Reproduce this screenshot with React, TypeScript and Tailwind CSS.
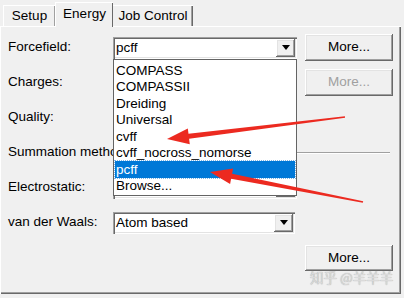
const sunken =
  "shadow-[inset_1px_1px_0_#a0a0a0,inset_2px_2px_0_#696969,inset_-1px_-1px_0_#ffffff,inset_-2px_-2px_0_#e3e3e3]";
const raised =
  "shadow-[inset_-1px_-1px_0_#696969,inset_1px_1px_0_#ffffff,inset_-2px_-2px_0_#a0a0a0,inset_2px_2px_0_#e3e3e3]";

function Combo({ text = "", className = "w-[184px]" }: { text?: string; className?: string }) {
  return (
    <div className={`flex h-[22px] items-stretch bg-white ${sunken} ${className}`}>
      <span className="flex flex-1 items-center pl-[3px] leading-none">{text}</span>
      <span className={`m-[2px] flex w-[19px] items-center justify-center bg-[#f0f0f0] ${raised}`}>
        <svg width="8" height="5" viewBox="0 0 8 5">
          <path d="M0 0h8L4 5z" fill="#000" />
        </svg>
      </span>
    </div>
  );
}

function Button({ disabled, className = "h-[27px]" }: { disabled?: boolean; className?: string }) {
  return (
    <div
      className={`flex w-[88px] items-center justify-center bg-[#f0f0f0] ${raised} ${className} ${
        disabled ? "text-[#a0a0a0]" : "text-black"
      }`}
    >
      More...
    </div>
  );
}

const items = ["COMPASS", "COMPASSII", "Dreiding", "Universal", "cvff", "cvff_nocross_nomorse", "pcff", "Browse..."];

export default function App() {
  return (
    <div className="relative h-[298px] w-[404px] overflow-hidden bg-[#f0f0f0] font-['Liberation_Sans',Arial,sans-serif] text-[13.5px] text-black">
      {/* tabs */}
      <div className="flex h-[26px] items-end pl-[3px]">
        <div className="flex h-[21px] w-[52px] items-center justify-center border-l border-t border-white shadow-[inset_-1px_0_0_#a0a0a0]">
          Setup
        </div>
        <div className="relative z-10 -mb-px flex h-[25px] w-[58px] items-center justify-center border-l border-t border-white bg-[#f0f0f0] pb-[2px] shadow-[inset_-1px_0_0_#696969]">
          Energy
        </div>
        <div className="flex h-[21px] w-[80px] items-center justify-center border-t border-white shadow-[inset_-1px_0_0_#696969,inset_-2px_0_0_#a0a0a0]">
          Job Control
        </div>
      </div>

      {/* tab page */}
      <div className="h-[268px] w-[401px] border-l border-t border-white shadow-[inset_-1px_-1px_0_#696969,inset_-2px_-2px_0_#a0a0a0] px-[7px] pt-[3px]">
        <div className="grid grid-cols-[97px_184px_88px] gap-x-[8px]">
          <div className="flex h-[35px] items-center">Forcefield:</div>
          <div className="flex items-center">
            <Combo text="pcff" />
          </div>
          <div className="flex items-center">
            <Button />
          </div>

          <div className="flex h-[35px] items-center">Charges:</div>
          <div className="flex items-center">
            <Combo />
          </div>
          <div className="flex items-center">
            <Button disabled />
          </div>

          <div className="flex h-[35px] items-center">Quality:</div>
          <div className="flex items-center">
            <Combo />
          </div>
          <div />

          <div className="col-span-3 flex h-[35px] items-center">
            <span className="whitespace-nowrap">Summation method</span>
            <div className="ml-2 mr-[3px] h-px flex-1 bg-[#a0a0a0] shadow-[0_1px_0_#ffffff]" />
          </div>

          <div className="flex h-[35px] items-center">Electrostatic:</div>
          <div className="flex items-center">
            <Combo />
          </div>
          <div />

          <div className="flex h-[35px] items-center whitespace-nowrap">van der Waals:</div>
          <div className="flex items-center">
            <Combo text="Atom based" className="w-[182px]" />
          </div>
          <div />

          <div className="col-start-3 mt-[5px]">
            <Button className="h-[26px]" />
          </div>
        </div>
      </div>

      {/* open dropdown list */}
      <div className="absolute left-[113px] top-[59px] z-20 w-[184px] border border-[#646464] bg-white pt-[2px] pb-px">
        {items.map((it) => (
          <div
            key={it}
            className={`flex h-[16.5px] items-center px-[2px] leading-none ${
              it === "pcff" ? "mx-px bg-[#0078d7] px-px text-white outline-1 outline-dotted outline-[#7fb5e6]" : ""
            }`}
          >
            {it}
          </div>
        ))}
      </div>

      {/* red arrows */}
      <svg className="absolute left-0 top-0 z-30" width="404" height="298" viewBox="0 0 404 298">
        <polygon
          points="344.9,116.2 188.5,133.8 187.8,128.4 167,139 189.8,144.2 189.1,138.8 345.1,117.8"
          fill="#ec2a20"
        />
        <polygon
          points="363.2,201.2 232.1,173.7 233.1,168.4 210,172 230.1,184.1 231.1,178.7 362.8,202.8"
          fill="#ec2a20"
        />
      </svg>

      {/* watermark */}
      <div className="absolute left-[310px] top-[271px] z-30 whitespace-nowrap font-['Noto_Sans_CJK_SC',sans-serif] text-[13.5px] leading-none text-[#dadada] [text-shadow:0_0_1px_#9a9a9a]">
        知乎 @羊羊羊
      </div>
    </div>
  );
}
